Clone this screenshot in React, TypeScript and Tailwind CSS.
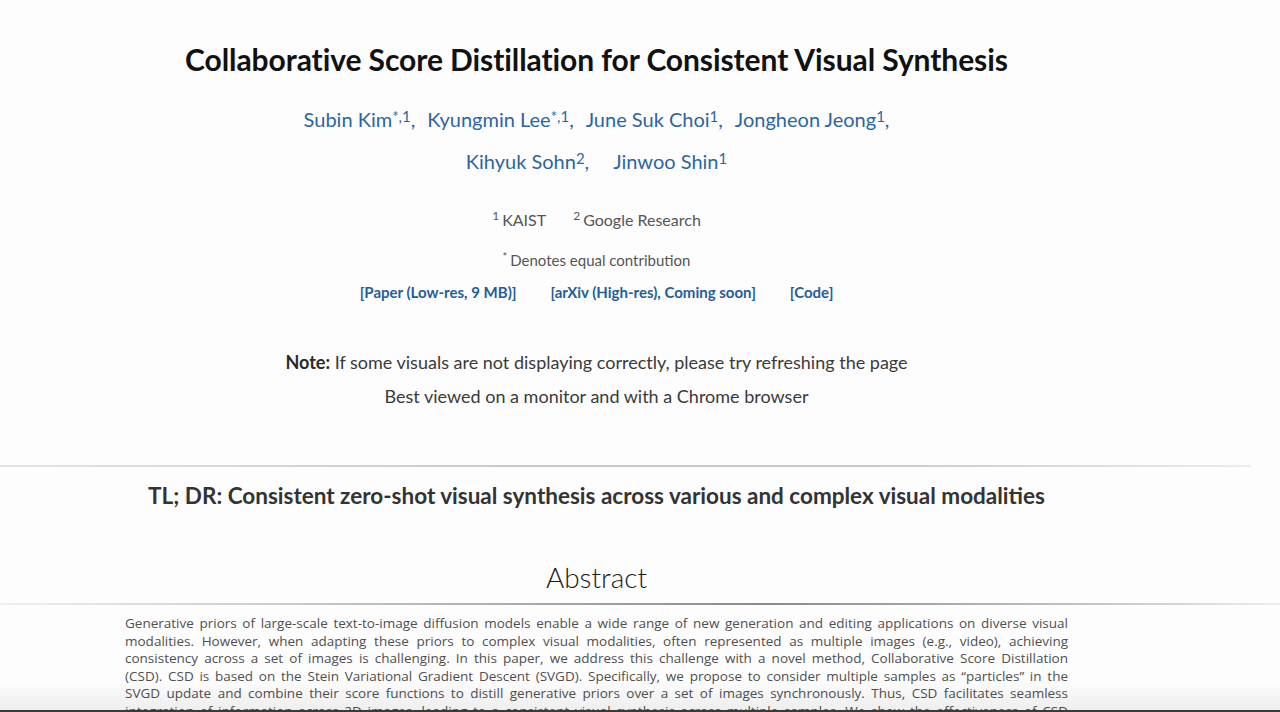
import React from "react";

const lines = [
  "Generative priors of large-scale text-to-image diffusion models enable a wide range of new generation and editing applications on diverse visual",
  "modalities. However, when adapting these priors to complex visual modalities, often represented as multiple images (e.g., video), achieving",
  "consistency across a set of images is challenging. In this paper, we address this challenge with a novel method, Collaborative Score Distillation",
  "(CSD). CSD is based on the Stein Variational Gradient Descent (SVGD). Specifically, we propose to consider multiple samples as \u201cparticles\u201d in the",
  "SVGD update and combine their score functions to distill generative priors over a set of images synchronously. Thus, CSD facilitates seamless",
  "integration of information across 2D images, leading to a consistent visual synthesis across multiple samples. We show the effectiveness of CSD",
];

function Author({ name, sup, last }: { name: string; sup: string; last?: boolean }) {
  return (
    <span className="whitespace-nowrap">
      <a className="text-[#2b65a3]">{name}</a>
      <sup className="text-[#2b65a3] text-[15px] relative -top-[5px]">{sup}</sup>
      {last ? "" : ","}
    </span>
  );
}

export default function App() {
  return (
    <div className="relative h-[712px] w-[1280px] overflow-hidden bg-[#fdfdfd] font-['Lato',sans-serif]">
      <div className="ml-[125px] w-[943px] flex flex-col items-center">
        <h1 className="mt-[39px] h-[40px] text-[30px] leading-[40px] font-bold text-[#111] tracking-[-0.08px]">
          Collaborative Score Distillation for Consistent Visual Synthesis
        </h1>
        <div className="mt-[19px] flex flex-col items-center text-[20px] leading-[42px] text-[#2b65a3]">
          <div className="flex gap-[12px]">
            <Author name="Subin Kim" sup="*,1" />
            <Author name="Kyungmin Lee" sup="*,1" />
            <Author name="June Suk Choi" sup="1" />
            <Author name="Jongheon Jeong" sup="1" />
          </div>
          <div className="flex gap-[24px]">
            <Author name="Kihyuk Sohn" sup="2" />
            <Author name="Jinwoo Shin" sup="1" last />
          </div>
        </div>
        <div className="mt-[26px] flex gap-[27px] text-[16px] leading-[24px] text-[#555]">
          <span>
            <sup className="text-[12px] mr-[3px]">1</sup>KAIST
          </span>
          <span>
            <sup className="text-[12px] mr-[3px]">2</sup>Google Research
          </span>
        </div>
        <div className="mt-[17px] text-[15px] leading-[22px] text-[#555]">
          <sup className="text-[11px] mr-[3px]">*</sup>Denotes equal contribution
        </div>
        <div className="mt-[10px] flex gap-[34px] text-[15px] leading-[22px] font-bold text-[#245d99]">
          <a>[Paper (Low-res, 9 MB)]</a>
          <a>[arXiv (High-res), Coming soon]</a>
          <a>[Code]</a>
        </div>
        <p className="mt-[46px] text-[18px] leading-[26px] text-[#3a3a3a]">
          <b className="text-[#2a2a2a]">Note:</b> If some visuals are not displaying correctly, please try refreshing the page
        </p>
        <p className="mt-[8px] text-[18px] leading-[26px] text-[#3a3a3a]">
          Best viewed on a monitor and with a Chrome browser
        </p>
      </div>
      <div className="mt-[56px] h-[2px] w-[1250px] bg-[linear-gradient(to_right,#e4e4e4,#c9c9c9_40%,#c9c9c9_70%,#ececec)]" />
      <div className="ml-[125px] w-[943px] flex flex-col items-center">
        <h2 className="mt-[14px] text-[22.5px] leading-[30px] font-bold text-[#333]">
          TL; DR: Consistent zero-shot visual synthesis across various and complex visual modalities
        </h2>
        <h2 className="mt-[48px] text-[28px] leading-[36px] font-light text-[#1a1a1a]">Abstract</h2>
      </div>
      <div className="mt-[8px] h-[2px] w-full bg-[linear-gradient(to_right,#f0f0f0,#bdbdbd_30%,#8a8a8a_60%,#d0d0d0_90%,#eeeeee)]" />
      <div className="ml-[125px] w-[943px] mt-[10px] font-['Open_Sans',sans-serif] text-[13.5px] leading-[17.5px] text-[#4f4f4f]">
        {lines.map((l, i) => (
          <div key={i} className="text-justify [text-align-last:justify] whitespace-nowrap">
            {l}
          </div>
        ))}
      </div>
      <div className="absolute left-0 right-0 bottom-[2px] h-[30px] bg-[linear-gradient(to_bottom,rgba(0,0,0,0),rgba(0,0,0,0.06))]" />
      <div className="absolute left-0 right-0 bottom-0 h-[2px] bg-[#3a3a3a]" />
    </div>
  );
}
